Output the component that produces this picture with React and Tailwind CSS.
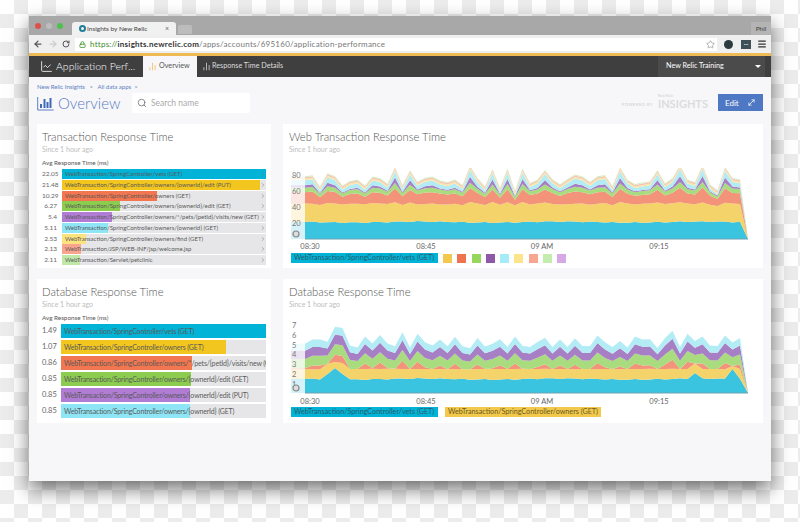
import React from "react";
import { ArrowLeft, ArrowRight, RotateCw, Lock, Star, Menu, ChartLine, ChartNoAxesColumn, Search, MoveDiagonal, ChevronRight } from "lucide-react";

const txRows = [
  ["22.05", "WebTransaction/SpringController/vets (GET)", "100%", "bg-[#00b3d7]"],
  ["21.48", "WebTransaction/SpringController/owners/{ownerId}/edit (PUT)", "97%", "bg-[#f2c61f]"],
  ["10.29", "WebTransaction/SpringController/owners (GET)", "46.6%", "bg-[#f2764f]"],
  ["6.27", "WebTransaction/SpringController/owners/{ownerId}/edit (GET)", "28.5%", "bg-[#8ccc4f]"],
  ["5.4", "WebTransaction/SpringController/owners/*/pets/{petId}/visits/new (GET)", "24.5%", "bg-[#b07cd4]"],
  ["5.11", "WebTransaction/SpringController/owners/{ownerId} (GET)", "22.5%", "bg-[#8ee5f5]"],
  ["2.53", "WebTransaction/SpringController/owners/find (GET)", "12%", "bg-[#fbe37e]"],
  ["2.13", "WebTransaction/JSP/WEB-INF/jsp/welcome.jsp", "9.5%", "bg-[#f8a48e]"],
  ["2.11", "WebTransaction/Servlet/petclinic", "9%", "bg-[#c0e8a8]"],
];

const dbRows = [
  ["1.49", "WebTransaction/SpringController/vets (GET)", "100%", "bg-[#00b3d7]"],
  ["1.07", "WebTransaction/SpringController/owners (GET)", "80.5%", "bg-[#f2c61f]"],
  ["0.86", "WebTransaction/SpringController/owners/*/pets/{petId}/visits/new (GET)", "64%", "bg-[#f2764f]"],
  ["0.85", "WebTransaction/SpringController/owners/{ownerId}/edit (GET)", "63.5%", "bg-[#8ccc4f]"],
  ["0.85", "WebTransaction/SpringController/owners/{ownerId}/edit (PUT)", "63%", "bg-[#b07cd4]"],
  ["0.85", "WebTransaction/SpringController/owners/{ownerId} (GET)", "63%", "bg-[#8ee5f5]"],
];

const swatches = ["bg-[#f2c94c]", "bg-[#ef7350]", "bg-[#97d65c]", "bg-[#9058a8]", "bg-[#a5ebf8]", "bg-[#fbe48a]", "bg-[#f8a690]", "bg-[#c4ecae]", "bg-[#d6a8e4]"];

// spike shape of both charts, index = time bucket
const webSpikes = [.3,.35,-.5,.5,.3,-.4,0,.1,-.4,.3,.2,-.2,.9,-.4,.7,-.1,.2,.3,0,-.1,.1,-.4,1,.2,-.5,.8,-.6,.8,-.9,.8,-.2,.1,.7,.1,-.3,.1,.4,.3,-.1,.3,.4,-.5,.9,.1,-.3,-.1,0,.7,-.2,.2,1,.1,-.1,1,-.3,-.9,.9,.2,.1];
const dbSpikes = [.1,.4,.4,-.4,.8,.8,-.1,-.5,.6,.1,.7,.1,-.3,.9,-.5,.8,.2,-.1,.4,-.2,.6,-.2,-.6,.5,-.3,.1,.4,-.4,.6,-.2,-.4,.2,.5,-.4,.4,-.4,.5,-.2,-.2,.7,.2,-.4,.3,-.5,.6,.4,.4,-.6,.5,1,-.4,.8,-.3,.6,-.1,-.2,.7,-.1,.5];

const noise = (i, k) => Math.sin(i * 12.9 + k * 78.2) * 0.5 + Math.sin(i * 4.1 + k * 3.3) * 0.5;

const webLayers = [
  ["#3bc4e0", (s, i) => 17 + noise(i, 1)],
  ["#f5d36b", (s, i) => 18 + 2 * s + noise(i, 2) * 1.5],
  ["#f2937a", (s, i) => 10 + 4 * s + noise(i, 3)],
  ["#a8dc7e", (s) => 4 + 1.5 * s],
  ["#a77fc4", (s) => 1 + Math.max(s, 0) * 5],
  ["#b4ecf5", (s) => Math.max(1, 4 + 3 * s)],
  ["#fae7a5", () => 1.5],
  ["#f8c3b4", () => 1.5],
  ["#d2eec0", () => 1],
];

const dbLayers = [
  ["#3bc4e0", (s, i) => (i === 4 ? 25 : i === 3 || i === 5 ? 19 : i === 57 ? 24 : i === 52 ? 20 : 14 + noise(i, 1))],
  ["#f5d36b", (s, i) => (i === 4 ? 6 : i === 57 ? 3 : 10 + noise(i, 2))],
  ["#f2937a", (s) => Math.max(s, 0) * 9],
  ["#a8dc7e", (s) => 9 + 2 * s],
  ["#a77fc4", (s) => 8 + 2 * s],
  ["#b4ecf5", (s) => 7 + s],
];

function Chart({ spikes, layers, baseline, ticks, labelY }) {
  const step = 7.5;
  const x0 = 17;
  let prev = spikes.map(() => baseline);
  const shapes = layers.map(([color, fn]) => {
    const next = spikes.map((s, i) => prev[i] - fn(s, i));
    const top = next.map((y, i) => `${x0 + i * step},${y.toFixed(1)}`);
    const bottom = prev.map((y, i) => `${x0 + i * step},${y.toFixed(1)}`).reverse();
    const endX = x0 + 443;
    const shape = { color, points: [...top, `${endX},${baseline}`, ...bottom].join(" "), y: next[0], h: prev[0] - next[0] };
    prev = next;
    return shape;
  });
  return (
    <svg width="472" height={labelY + 3} className="block" style={{ fontFamily: "Lato, sans-serif" }}>
      {shapes.map((p) => (
        <rect key={p.color} x="3" y={p.y} width="14" height={p.h} fill={p.color} opacity="0.22" />
      ))}
      {shapes.map((p) => (
        <polygon key={p.color} points={p.points} fill={p.color} />
      ))}
      <line x1="17" x2="460" y1={baseline} y2={baseline} stroke="#6aa3b3" strokeWidth="1" />
      {ticks.map(([label, y]) => (
        <text key={label} x="4" y={y} fontSize="7.5" fill="#777">{label}</text>
      ))}
      <circle cx="8" cy={baseline - 5} r="3" fill="#ddd" stroke="#888" strokeWidth="1.2" />
      {[["08:30", 22], ["08:45", 138], ["09 AM", 254], ["09:15", 371]].map(([label, x]) => (
        <text key={label} x={x} y={labelY} fontSize="7.5" fill="#666" textAnchor="middle">{label}</text>
      ))}
    </svg>
  );
}

function CardTitle({ title }) {
  return (
    <>
      <h2 className="whitespace-nowrap text-[11.25px] leading-[14px] font-light text-[#555]">{title}</h2>
      <p className="text-[7px] leading-[10px] text-[#bdbdbd]">Since 1 hour ago</p>
    </>
  );
}

function BarRow({ row, big }) {
  const [value, label, width, color] = row;
  return (
    <div className={big ? "flex h-[14px] items-center" : "flex h-[10px] items-center"}>
      <span className={big ? "w-[14px] text-right text-[7.5px] text-[#666]" : "w-[15px] text-right text-[6.5px] text-[#666]"}>{value}</span>
      <div className="relative ml-[5px] h-full flex-1 overflow-hidden bg-[#e6e6e8]">
        <div className={`h-full ${color}`} style={{ width }} />
        <span className={big ? "absolute left-[3px] top-0 whitespace-nowrap text-[7px] tracking-[-0.15px] leading-[14px] text-[#5a5a5a]" : "absolute left-[3px] top-0 whitespace-nowrap text-[6px] leading-[10px] text-[#5a5a5a]"}>{label}</span>
        {!big && <ChevronRight className="absolute right-0 top-[2px] text-[#777]" size={6} />}
      </div>
    </div>
  );
}

export default function App() {
  return (
    <div className="h-[522px] w-[800px] overflow-hidden bg-[repeating-conic-gradient(#ececec_0_25%,#fff_0_50%)] bg-[length:28px_28px] px-[29px] pt-[16px] font-['Lato',sans-serif]">
      <div className="flex h-[465px] flex-col shadow-[0_8px_18px_rgba(0,0,0,0.55)]">
        {/* browser tabs */}
        <div className="flex h-[19px] items-end bg-[#a8a8a8]">
          <div className="flex h-full items-center gap-[3px] pl-[6px]">
            <span className="h-[6px] w-[6px] rounded-full bg-[#e0504a]" />
            <span className="ml-[2px] h-[6px] w-[6px] rounded-full bg-[#bdbdbd]" />
            <span className="ml-[2px] h-[6px] w-[6px] rounded-full bg-[#4cc24c]" />
          </div>
          <div className="ml-[9px] flex h-[13px] w-[104px] items-center rounded-t-[3px] bg-[#f1f1f1] pl-[7px] pr-[7px]">
            <span className="h-[7px] w-[7px] rounded-full border-2 border-[#1f7f99]" />
            <span className="ml-[1px] flex-1 text-[6.5px] text-[#444]">Insights by New Relic</span>
            <span className="text-[7px] leading-none text-[#666]">×</span>
          </div>
          <div className="ml-[2px] mb-[1px] h-[9px] w-[14px] rounded-t-[2px] bg-[#bcbcbc]" />
          <div className="ml-auto flex h-[13px] w-[20px] items-center justify-center bg-[#b4b4b4] text-[6.5px] text-[#444]">Phil</div>
        </div>

        {/* url bar */}
        <div className="flex h-[18px] items-center bg-[#efefef]">
          <ArrowLeft className="ml-[4px] text-[#555]" size={10} strokeWidth={3} />
          <ArrowRight className="ml-[5px] text-[#ccc]" size={10} strokeWidth={3} />
          <RotateCw className="ml-[4px] text-[#555]" size={8} strokeWidth={3} />
          <div className="ml-[5px] flex h-[13px] w-[642px] items-center bg-white pl-[4px] pr-[2px] text-[8px] tracking-[0.25px]">
            <Lock className="mr-[4px] text-[#4f9a3c]" size={7} strokeWidth={3} />
            <span className="text-[#3a8a2e]">https://</span>
            <span className="font-bold text-[#333]">insights.newrelic.com</span>
            <span className="text-[#777]">/apps/accounts/695160/application-performance</span>
            <Star className="ml-auto text-[#999]" size={9} />
          </div>
          <span className="ml-[7px] h-[9px] w-[9px] rounded-full bg-[#2b3b3f]" />
          <span className="ml-[8px] flex h-[9px] w-[10px] items-center justify-center bg-[#3f5156] text-[6px] leading-none text-white">···</span>
          <Menu className="ml-[6px] text-[#333]" size={10} strokeWidth={3} />
        </div>
        <div className="h-[3px] bg-[#efbb57]" />

        {/* app header */}
        <div className="flex h-[21px] items-stretch bg-[#3f3f3f]">
          <div className="flex w-[114px] items-center pl-[11px] text-white">
            <ChartLine size={13} strokeWidth={1.5} />
            <span className="ml-[3px] whitespace-nowrap text-[10.5px] font-light">Application Perf...</span>
          </div>
          <div className="flex w-[54px] items-center bg-[#f7f7f9] pl-[5px] text-[7.2px] text-[#555]">
            <ChartNoAxesColumn className="mr-[2px] text-[#efbb57]" size={9} />
            Overview
          </div>
          <div className="flex items-center pl-[5px] text-[7.2px] text-[#ddd]">
            <ChartNoAxesColumn className="mr-[1px]" size={9} />
            Response Time Details
          </div>
          <div className="ml-auto mr-[6px] flex w-[107px] items-center bg-[#4b4b4b] pl-[8px] text-[7.2px] text-white">
            New Relic Training
            <span className="ml-[31px] h-0 w-0 border-x-[3px] border-t-[3px] border-x-transparent border-t-white" />
          </div>
        </div>

        {/* page */}
        <div className="flex-1 bg-[#f7f7f9] pl-[8px]">
          <div className="flex h-[47px] items-start">
            <div className="w-[94px]">
              <p className="whitespace-nowrap pt-[7px] text-[6px] leading-[6px] text-[#5b7ec2]">New Relic Insights &nbsp;&nbsp;&gt;&nbsp;&nbsp; All data apps &nbsp;&gt;</p>
              <div className="mt-[3px] flex items-center text-[#5b7ec2]">
                <svg width="17" height="15" viewBox="0 0 17 15" fill="none">
                  <path d="M.7 1v13h16" stroke="#5b7ec2" strokeWidth="1" />
                  <path d="M4 8v4M7.5 3v9M10.5 6v6M13.5 2v10" stroke="#3f6ab8" strokeWidth="2" />
                </svg>
                <span className="ml-[4px] text-[15px] font-light leading-[20px]">Overview</span>
              </div>
            </div>
            <div className="ml-[1px] mt-[16px] flex h-[20px] w-[118px] items-center rounded-[2px] bg-white pl-[5px] text-[8.5px] text-[#aaa]">
              <Search className="mr-[4px] text-[#777]" size={10} />
              Search name
            </div>
            <div className="ml-auto mr-[8px] mt-[17px] flex items-center">
              <span className="mt-[6px] text-[4.2px] tracking-[0.4px] text-[#ccc]">POWERED BY</span>
              <div className="ml-[5px] flex flex-col">
                <span className="text-[3.5px] leading-[3px] text-[#ccc]">New Relic</span>
                <span className="text-[11px] font-bold leading-[12px] text-[#dcdcde]">INSIGHTS</span>
              </div>
              <div className="ml-[10px] flex h-[17px] w-[45px] items-center justify-between bg-[#4f78c4] px-[7px] text-[8px] text-white">
                Edit
                <MoveDiagonal size={9} />
              </div>
            </div>
          </div>

          <div className="flex flex-col gap-[11px]">
            <div className="flex gap-[12px]">
              <section className="h-[144px] w-[234px] bg-white pl-[5px] pr-[5px] pt-[6px]">
                <CardTitle title="Transaction Response Time" />
                <p className="mt-[5px] text-[6.3px] leading-[8px] text-[#555]">Avg Response Time (ms)</p>
                <div className="mt-[2px] flex flex-col gap-[0.75px]">
                  {txRows.map((row) => <BarRow key={row[1]} row={row} />)}
                </div>
              </section>
              <section className="h-[144px] w-[480px] bg-white pt-[6px]">
                <div className="pl-[6px]"><CardTitle title="Web Transaction Response Time" /></div>
                <div className="mt-[14px] pl-[5px]">
                  <Chart spikes={webSpikes} layers={webLayers} baseline={71} labelY={81} ticks={[["80", 10], ["60", 26], ["40", 42], ["20", 58]]} />
                </div>
                <div className="mt-[1px] flex items-center pl-[8px]">
                  <span className="flex h-[10px] w-[147px] items-center whitespace-nowrap bg-[#00b3d7] pl-[3px] text-[7.2px] text-[#2d5d6b]">WebTransaction/SpringController/vets (GET)</span>
                  <div className="ml-[5px] flex gap-[5.3px]">
                    {swatches.map((c) => <span key={c} className={`h-[9px] w-[9px] ${c}`} />)}
                  </div>
                </div>
              </section>
            </div>

            <div className="flex gap-[12px]">
              <section className="h-[144px] w-[234px] bg-white pl-[5px] pr-[5px] pt-[6px]">
                <CardTitle title="Database Response Time" />
                <p className="mt-[5px] text-[6.3px] leading-[8px] text-[#555]">Avg Response Time (ms)</p>
                <div className="mt-[2px] flex flex-col gap-[2px]">
                  {dbRows.map((row) => <BarRow key={row[1]} row={row} big />)}
                </div>
              </section>
              <section className="h-[144px] w-[480px] bg-white pt-[6px]">
                <div className="pl-[6px]"><CardTitle title="Database Response Time" /></div>
                <div className="mt-[12px] pl-[5px]">
                  <Chart spikes={dbSpikes} layers={dbLayers} baseline={72} labelY={83} ticks={[["7", 7], ["6", 17], ["5", 27], ["4", 36], ["3", 46], ["2", 56], ["1", 66]]} />
                </div>
                <div className="flex items-center gap-[7px] pl-[8px]">
                  <span className="flex h-[10px] w-[147px] items-center whitespace-nowrap bg-[#00b3d7] pl-[3px] text-[7.2px] text-[#2d5d6b]">WebTransaction/SpringController/vets (GET)</span>
                  <span className="flex h-[10px] w-[156px] items-center whitespace-nowrap bg-[#f2c94c] pl-[3px] text-[7.2px] text-[#6b5a20]">WebTransaction/SpringController/owners (GET)</span>
                </div>
              </section>
            </div>
          </div>
        </div>
      </div>
    </div>
  );
}
